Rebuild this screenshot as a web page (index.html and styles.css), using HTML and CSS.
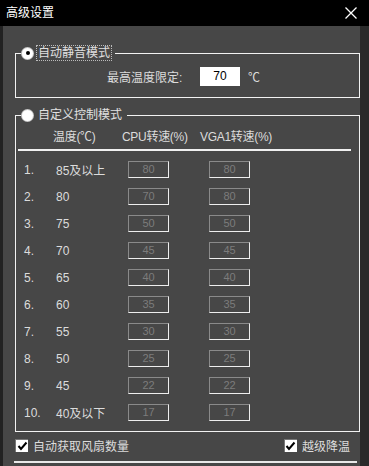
FILE: index.html
```html
<!DOCTYPE html>
<html lang="zh-CN">
<head>
<meta charset="utf-8">
<title>高级设置</title>
<link rel="stylesheet" href="styles.css">
</head>
<body>
<div class="window">
  <div class="titlebar">
    <span class="title">高级设置</span>
    <svg class="close" width="12" height="12" viewBox="0 0 12 12"><path d="M0.5 0.5 L11.5 11.5 M11.5 0.5 L0.5 11.5" stroke="#fff" stroke-width="1.3" fill="none"/></svg>
  </div>
  <div class="frame">
    <div class="body">
      <section class="group g1">
        <div class="legend"><span class="radio on"></span><span class="ltext focus">自动静音模式</span></div>
        <div class="limit">
          <span class="lbl">最高温度限定:</span>
          <span class="tinput">70</span>
          <span class="unit">℃</span>
        </div>
      </section>
      <section class="group g2">
        <div class="legend"><span class="radio"></span><span class="ltext">自定义控制模式</span></div>
        <div class="thead">
          <span>温度(℃)</span>
          <span>CPU转速(%)</span>
          <span>VGA1转速(%)</span>
        </div>
        <div class="sep"></div>
        <div class="rows">
          <div class="row"><span>1.</span><span>85及以上</span><span class="box">80</span><span class="box">80</span></div>
          <div class="row"><span>2.</span><span>80</span><span class="box">70</span><span class="box">80</span></div>
          <div class="row"><span>3.</span><span>75</span><span class="box">50</span><span class="box">50</span></div>
          <div class="row"><span>4.</span><span>70</span><span class="box">45</span><span class="box">45</span></div>
          <div class="row"><span>5.</span><span>65</span><span class="box">40</span><span class="box">40</span></div>
          <div class="row"><span>6.</span><span>60</span><span class="box">35</span><span class="box">35</span></div>
          <div class="row"><span>7.</span><span>55</span><span class="box">30</span><span class="box">30</span></div>
          <div class="row"><span>8.</span><span>50</span><span class="box">25</span><span class="box">25</span></div>
          <div class="row"><span>9.</span><span>45</span><span class="box">22</span><span class="box">22</span></div>
          <div class="row"><span>10.</span><span>40及以下</span><span class="box">17</span><span class="box">17</span></div>
        </div>
      </section>
      <div class="checks">
        <label class="check"><span class="cb"><svg width="11" height="11" viewBox="0 0 11 11"><path d="M1.5 5 L4 8 L9.5 1.5" stroke="#000" stroke-width="2" fill="none"/></svg></span><span>自动获取风扇数量</span></label>
        <label class="check"><span class="cb"><svg width="11" height="11" viewBox="0 0 11 11"><path d="M1.5 5 L4 8 L9.5 1.5" stroke="#000" stroke-width="2" fill="none"/></svg></span><span>越级降温</span></label>
      </div>
      <div class="bottomline"></div>
    </div>
  </div>
</div>
</body>
</html>
```

FILE: styles.css
```css
* { box-sizing: border-box; }
html, body { margin: 0; padding: 0; }
body {
  width: 369px;
  height: 466px;
  overflow: hidden;
  background: #474747;
  font-family: "Liberation Sans", "Noto Sans CJK SC", sans-serif;
  font-size: 12px;
  color: #dcdcdc;
}
.window { width: 369px; height: 466px; display: flex; flex-direction: column; }
.titlebar {
  height: 26px;
  flex: none;
  background: #000;
  display: flex;
  align-items: center;
  justify-content: space-between;
  padding: 0 12px 0 6px;
}
.title { color: #fff; font-size: 12px; line-height: 14px; }
.close { display: block; }
.frame {
  flex: 1;
  display: flex;
  border-left: 3px solid #222;
  border-right: 9px solid #2a2a2a;
  background: #474747;
}
.body {
  flex: 1;
  padding: 27px 0 0 12px;
  display: flex;
  flex-direction: column;
}
.group {
  border: 1px solid #f2f2f2;
}
.legend {
  display: flex;
  align-items: center;
  width: max-content;
  height: 16px;
  margin: -9px 0 0 5px;
  padding: 0 3px 0 1px;
  background: #474747;
}
.radio {
  width: 11px;
  height: 11px;
  border-radius: 50%;
  background: #fff;
  box-shadow: 0 0 0 1px #c8c8c8;
  position: relative;
  flex: none;
}
.radio.on::after {
  content: "";
  position: absolute;
  left: 3.5px;
  top: 3.5px;
  width: 4px;
  height: 4px;
  border-radius: 50%;
  background: #000;
}
.ltext {
  margin-left: 3px;
  padding: 0 1px;
  line-height: 14px;
  border: 1px solid transparent;
  color: #e0e0e0;
}
.ltext.focus { border: 1px dotted #bbb; }
.g1 { padding-bottom: 11px; }
.limit {
  display: flex;
  align-items: center;
  height: 19px;
  margin-top: 6px;
  padding-left: 91px;
}
.lbl { width: 93px; }
.tinput {
  width: 40px;
  height: 19px;
  background: #fff;
  color: #000;
  text-align: center;
  line-height: 19px;
}
.unit { margin-left: 8px; }
.g2 { margin-top: 17px; padding-bottom: 5px; }
.thead {
  display: grid;
  grid-template-columns: 69px 78px auto;
  padding: 6px 0 0 37px;
  line-height: 16px;
  letter-spacing: -0.3px;
}
.sep {
  height: 2px;
  background: #f0f0f0;
  margin: 4px 8px 0 2px;
}
.rows { margin-top: 5px; }
.row {
  display: grid;
  grid-template-columns: 32px 72px 81px 41px;
  align-items: center;
  height: 27px;
  padding-left: 8px;
}
.box {
  width: 41px;
  height: 17px;
  border-top: 1px solid #8a8a8a;
  border-left: 1px solid #8a8a8a;
  border-right: 1px solid #eee;
  border-bottom: 1px solid #eee;
  color: #7c7c7c;
  font-size: 11px;
  line-height: 15px;
  text-align: center;
}
.checks {
  height: 25px;
  margin-top: 1px;
  display: flex;
  align-items: center;
  justify-content: space-between;
  padding-right: 10px;
}
.check { display: flex; align-items: center; }
.cb {
  width: 13px;
  height: 13px;
  background: #fff;
  border-top: 1px solid #777;
  border-left: 1px solid #777;
  display: flex;
  align-items: center;
  justify-content: center;
  margin-right: 5px;
}
.cb svg { display: block; }
.bottomline {
  height: 2px;
  background: #e8e8e8;
  margin: 3px 0 0 -1px;
  width: 343px;
}
```
